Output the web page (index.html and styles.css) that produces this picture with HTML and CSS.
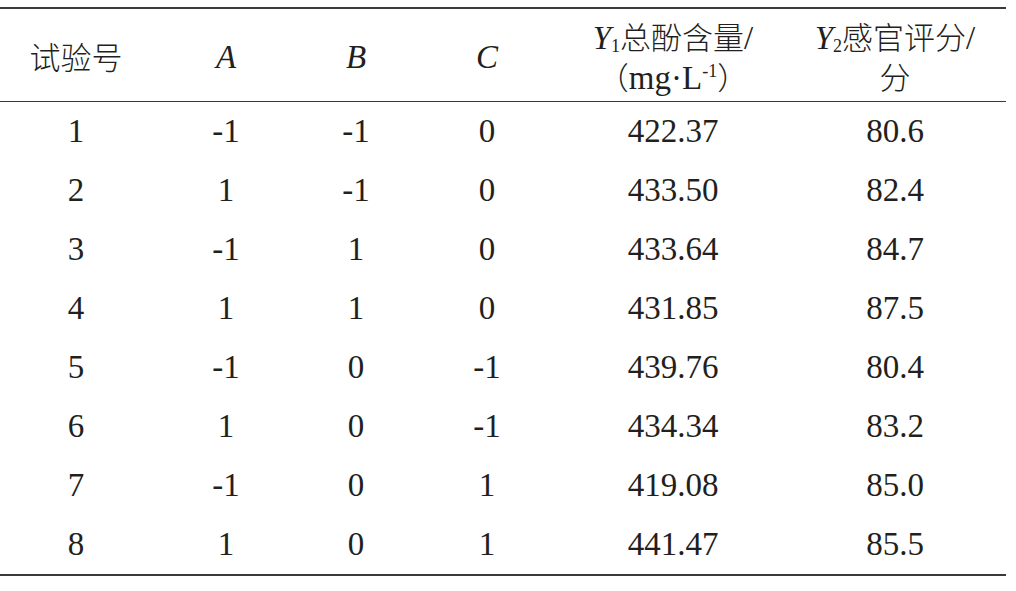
FILE: index.html
```
<!DOCTYPE html>
<html>
<head>
  <title>试验结果</title>
  <meta charset="UTF-8">
  <link rel="stylesheet" href="styles.css">
</head>
<body>
  <table class="data-table">
    <colgroup>
      <col class="col-no">
      <col class="col-a">
      <col class="col-b">
      <col class="col-c">
      <col class="col-y1">
      <col class="col-y2">
    </colgroup>
    <thead>
      <tr>
        <th><span class="cjk">试验号</span></th>
        <th><i>A</i></th>
        <th><i>B</i></th>
        <th><i>C</i></th>
        <th><i>Y</i><sub>1</sub><span class="cjk">总酚含量</span>/<br><span class="cjk">（</span>mg·L<sup>-1</sup><span class="cjk">）</span></th>
        <th><i>Y</i><sub>2</sub><span class="cjk">感官评分</span>/<br><span class="cjk">分</span></th>
      </tr>
    </thead>
    <tbody>
      <tr><td>1</td><td>-1</td><td>-1</td><td>0</td><td>422.37</td><td>80.6</td></tr>
      <tr><td>2</td><td>1</td><td>-1</td><td>0</td><td>433.50</td><td>82.4</td></tr>
      <tr><td>3</td><td>-1</td><td>1</td><td>0</td><td>433.64</td><td>84.7</td></tr>
      <tr><td>4</td><td>1</td><td>1</td><td>0</td><td>431.85</td><td>87.5</td></tr>
      <tr><td>5</td><td>-1</td><td>0</td><td>-1</td><td>439.76</td><td>80.4</td></tr>
      <tr><td>6</td><td>1</td><td>0</td><td>-1</td><td>434.34</td><td>83.2</td></tr>
      <tr><td>7</td><td>-1</td><td>0</td><td>1</td><td>419.08</td><td>85.0</td></tr>
      <tr><td>8</td><td>1</td><td>0</td><td>1</td><td>441.47</td><td>85.5</td></tr>
    </tbody>
  </table>
</body>
</html>
```

FILE: styles.css
```
body {
  margin: 0;
  background-color: #fff;
  color: #231f20;
  font-family: "Liberation Serif", "Times New Roman", serif;
}

.cjk {
  font-family: "Noto Sans CJK SC", sans-serif;
  font-weight: 300;
  font-size: 31px;
}

.data-table {
  width: 1006px;
  margin-top: 7px;
  border-collapse: collapse;
  table-layout: fixed;
  border-top: 2px solid #3a3a3a;
  border-bottom: 2px solid #3a3a3a;
  font-size: 33px;
}

.col-no { width: 152px; }
.col-a { width: 148px; }
.col-b { width: 112px; }
.col-c { width: 150px; }
.col-y1 { width: 222px; }
.col-y2 { width: 222px; }

th, td {
  padding: 0;
  text-align: center;
  vertical-align: middle;
  white-space: nowrap;
}

th {
  height: 93px;
  padding-top: 5px;
  box-sizing: border-box;
  font-weight: normal;
  line-height: 38px;
  border-bottom: 1px solid #3a3a3a;
}

td {
  height: 59px;
  line-height: 59px;
}

i {
  font-style: italic;
}

sub, sup {
  font-size: 18px;
  line-height: 0;
}

sub {
  vertical-align: -3px;
}

sup {
  vertical-align: 12px;
}
```
